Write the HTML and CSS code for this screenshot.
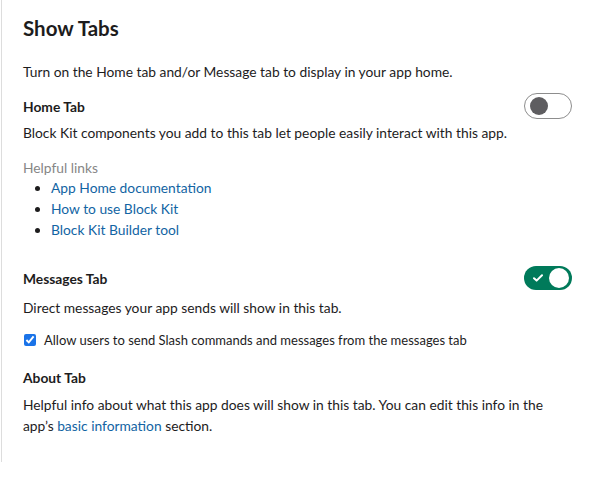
FILE: index.html
```html
<!DOCTYPE html>
<html>
<head>
<meta charset="utf-8">
<link rel="stylesheet" href="styles.css">
</head>
<body>
<div class="panel">
  <h1 class="title">Show Tabs</h1>
  <p class="intro">Turn on the Home tab and/or Message tab to display in your app home.</p>

  <section class="tab home">
    <div class="tab-head">
      <h2 class="tab-name">Home Tab</h2>
      <span class="toggle off"><span class="knob"></span></span>
    </div>
    <p class="desc">Block Kit components you add to this tab let people easily interact with this app.</p>
    <div class="links">
      <div class="links-label">Helpful links</div>
      <ul class="link-list">
        <li><a href="#">App Home documentation</a></li>
        <li><a href="#">How to use Block Kit</a></li>
        <li><a href="#">Block Kit Builder tool</a></li>
      </ul>
    </div>
  </section>

  <section class="tab messages">
    <div class="tab-head">
      <h2 class="tab-name">Messages Tab</h2>
      <span class="toggle on">
        <svg class="check" width="10" height="8" viewBox="0 0 10 8"><path d="M1 4.2 L3.6 6.6 L9 1.2" fill="none" stroke="#fff" stroke-width="2" stroke-linecap="round" stroke-linejoin="round"/></svg>
        <span class="knob"></span>
      </span>
    </div>
    <p class="desc">Direct messages your app sends will show in this tab.</p>
    <label class="check-row"><input type="checkbox" checked class="cb"><span>Allow users to send Slash commands and messages from the messages tab</span></label>
  </section>

  <section class="tab about">
    <h2 class="tab-name">About Tab</h2>
    <p class="desc">Helpful info about what this app does will show in this tab. You can edit this info in the app’s <a href="#">basic information</a> section.</p>
  </section>
</div>
</body>
</html>
```

FILE: styles.css
```css
* { box-sizing: border-box; }
html, body { margin: 0; padding: 0; background: #fff; }
body {
  font-family: Lato, "Noto Sans", sans-serif;
  color: #1d1c1d;
  font-size: 13.8px;
  line-height: 21px;
}
.panel {
  width: 591px;
  min-height: 462px;
  border-left: 1px solid #dddddd;
  margin-left: 1px;
  padding: 13px 20px 20px 21px;
}
.title {
  margin: 0;
  font-size: 20.5px;
  line-height: 30px;
  font-weight: 700;
}
.intro {
  margin: 18px 0 0;
}
.tab { margin: 0; }
.tab-head {
  display: flex;
  align-items: center;
  justify-content: space-between;
}
.tab-name {
  margin: 0;
  font-size: 13.8px;
  font-weight: 700;
  line-height: 21px;
}
.home { margin-top: 11px; }
.desc { margin: 7px 0 0; }
.home .desc { margin-top: 3px; }
.toggle {
  position: relative;
  display: inline-block;
  width: 48px;
  height: 26px;
  border-radius: 13px;
}
.toggle.off {
  border: 1px solid #8d8d8d;
  background: #fff;
}
.toggle.off .knob {
  position: absolute;
  left: 5px;
  top: 3px;
  width: 18px;
  height: 18px;
  border-radius: 50%;
  background: #5e5d60;
}
.toggle.on {
  background: #007a5a;
  height: 24px;
  border-radius: 12px;
}
.toggle.on .knob {
  position: absolute;
  right: 3px;
  top: 2px;
  width: 20px;
  height: 20px;
  border-radius: 50%;
  background: #fff;
}
.toggle.on .check {
  position: absolute;
  left: 9px;
  top: 8px;
}
.links { margin-top: 14px; }
.links-label { color: #868686; margin-bottom: -1px; }
.link-list {
  margin: 0;
  padding-left: 28px;
}
.link-list li::marker { color: #1d1c1d; }
a { color: #1264a3; text-decoration: none; }
.messages { margin-top: 26px; }
.messages .desc { margin-top: 7px; }
.check-row {
  display: flex;
  align-items: center;
  margin-top: 13px;
  font-size: 13px;
  line-height: 18px;
  font-family: Lato, "Open Sans", sans-serif;
}
.cb {
  margin: 0 8px 0 1px;
  width: 12px;
  height: 12px;
  accent-color: #1a73e8;
}
.about { margin-top: 18px; }
.about .desc { margin-top: 6px; }
```
